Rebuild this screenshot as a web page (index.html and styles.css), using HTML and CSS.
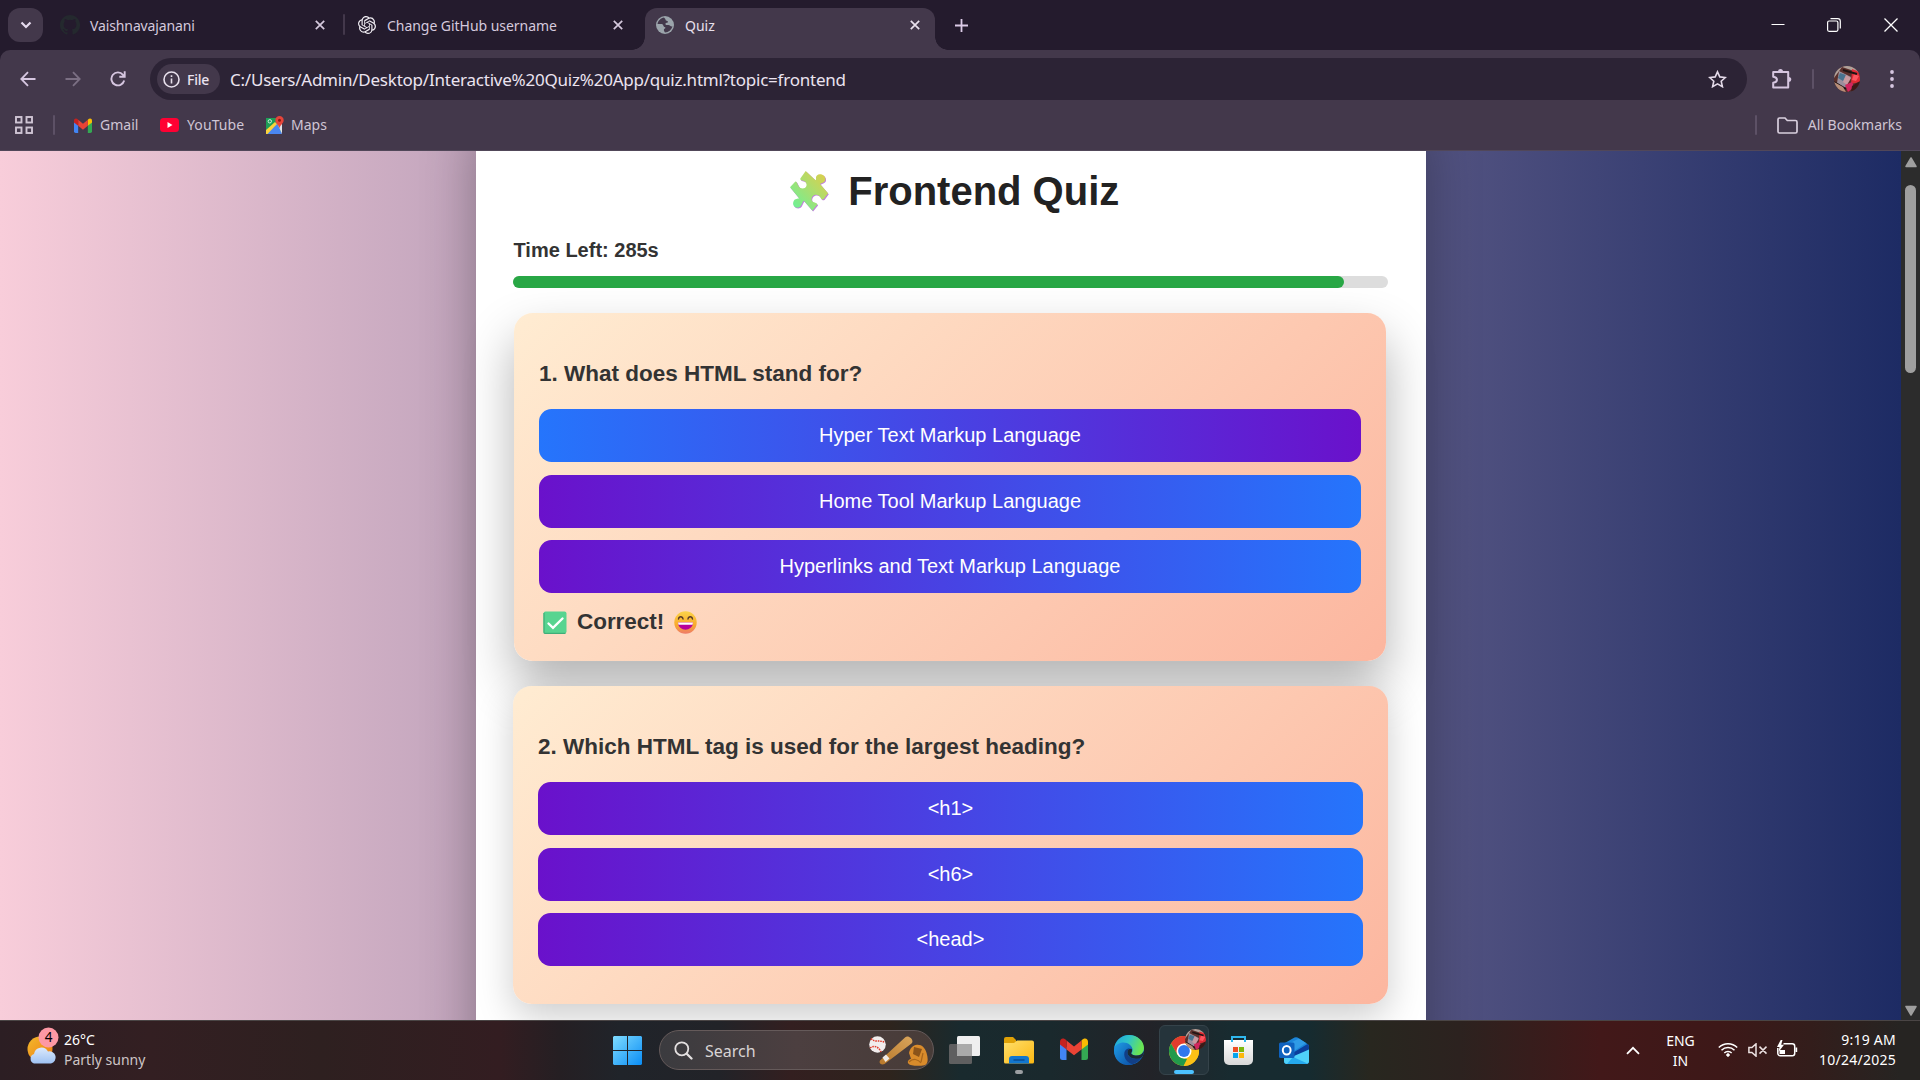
FILE: index.html
```html
<!DOCTYPE html>
<html lang="en">
<head>
<meta charset="utf-8">
<title>Quiz</title>
<link rel="stylesheet" href="styles.css">
</head>
<body>
<svg width="0" height="0" class="defs" aria-hidden="true">
  <defs>
    <linearGradient id="puz" x1="0" y1="1" x2="1" y2="0"><stop offset="0" stop-color="#62f59c"/><stop offset=".5" stop-color="#a6df72"/><stop offset="1" stop-color="#e6cc44"/></linearGradient>
    <linearGradient id="sun" x1="0" y1="0" x2="1" y2="1"><stop offset="0" stop-color="#f2b92c"/><stop offset="1" stop-color="#f07b12"/></linearGradient>
    <linearGradient id="cloud" x1="0" y1="0" x2="0" y2="1"><stop offset="0" stop-color="#dce9fb"/><stop offset="1" stop-color="#9fc2f3"/></linearGradient>
    <linearGradient id="win" x1="0" y1="0" x2="1" y2="1"><stop offset="0" stop-color="#7fdcff"/><stop offset="1" stop-color="#0a8df5"/></linearGradient>
    <linearGradient id="fold" x1="0" y1="0" x2="1" y2="1"><stop offset="0" stop-color="#ffdf6b"/><stop offset="1" stop-color="#fcb813"/></linearGradient>
    <linearGradient id="edgeTop" x1="0" y1="0" x2="1" y2=".3"><stop offset="0" stop-color="#1fa5dc"/><stop offset=".5" stop-color="#2fc4c9"/><stop offset="1" stop-color="#6ae553"/></linearGradient>
    <linearGradient id="edgeLow" x1="0" y1="0" x2="1" y2="1"><stop offset="0" stop-color="#1f9de6"/><stop offset="1" stop-color="#0c4fa5"/></linearGradient>
    <linearGradient id="bat" x1="0" y1="1" x2="1" y2="0"><stop offset="0" stop-color="#b8782a"/><stop offset="1" stop-color="#d9a55c"/></linearGradient>
    <linearGradient id="face" x1="0" y1="0" x2="0" y2="1"><stop offset="0" stop-color="#fbd34a"/><stop offset=".6" stop-color="#f9ab2c"/><stop offset="1" stop-color="#ee7a6a"/></linearGradient>
    <linearGradient id="paper" x1="0" y1="0" x2="0" y2="1"><stop offset="0" stop-color="#ffffff"/><stop offset="1" stop-color="#d8d8d8"/></linearGradient>
    <clipPath id="round"><circle cx="13" cy="13" r="13"/></clipPath>
    <symbol id="gmail" viewBox="0 0 28 22">
      <path d="M0 4v15.500a2.500 2.500 0 0 0 2.500 2.500H6.500V9z" fill="#4285f4"/>
      <path d="M28 4v15.500a2.500 2.500 0 0 1-2.500 2.500H21.500V9z" fill="#34a853"/>
      <path d="M21.500 2.500V11.500L28 6.500V4c0-3.500-3.500-4.800-6.500-1.500z" fill="#fbbc04"/>
      <path d="M6.500 11.500V2.500l7.500 6 7.500-6v9L14 17.200z" fill="#ea4335"/>
      <path d="M0 4v2.500l6.500 5v-9C3.500-.8 0 .5 0 4z" fill="#c5221f"/>
    </symbol>
    <symbol id="avatar" viewBox="0 0 26 26">
      <g clip-path="url(#round)">
        <rect width="26" height="26" fill="#5a2f2b"/>
        <path d="M0 0h26v7L8 1 0 12z" fill="#b0a29b"/>
        <path d="M5 5l12 6-6 11-8-5z" fill="#9b8f9c"/>
        <path d="M6 7l6 2-3 6-5-3z" fill="#49738f"/>
        <path d="M12 9l5 3-4 7-4-3z" fill="#c89aa0"/>
        <path d="M18 3l8 3v10l-9 2z" fill="#e02b35"/>
        <path d="M20 8l5 2-3 5-4-1z" fill="#ff5660"/>
        <path d="M9 4l14 4M0 16l12 7" stroke="#1e1414" stroke-width="2"/>
        <path d="M0 16l9 5 3 5H0z" fill="#b88e78"/>
        <path d="M11 19l7-3 2 5-6 5z" fill="#d1265d"/>
        <path d="M18 20l8-5v11h-9z" fill="#3c1917"/>
      </g>
    </symbol>
    <symbol id="x" viewBox="0 0 10 10"><path d="M.8.800l8.400 8.400M9.200.800L.8 9.200" stroke="currentColor" stroke-width="1.700" fill="none"/></symbol>
  </defs>
</svg>

<header class="strip">
  <div class="tab-search"><svg width="12" height="8" viewBox="0 0 12 8"><path d="M1.500 1.500L6 6l4.500-4.500" fill="none" stroke="#e6dbef" stroke-width="2.200"/></svg></div>
  <div class="tab tab-a">
    <svg width="20" height="20" viewBox="0 0 16 16"><path fill="#24292e" d="M8 0C3.580 0 0 3.580 0 8c0 3.540 2.290 6.530 5.470 7.590.4.070.55-.17.55-.38v-1.490c-2.010.37-2.530-.49-2.690-.94-.09-.23-.48-.94-.82-1.130-.28-.15-.68-.52-.01-.53.63-.01 1.080.58 1.230.82.72 1.210 1.870.87 2.330.66.070-.52.280-.87.510-1.070-1.780-.2-3.640-.89-3.640-3.950 0-.87.310-1.590.82-2.150-.08-.2-.36-1.020.080-2.120 0 0 .67-.21 2.200.82a7.600 7.600 0 0 1 4 0c1.530-1.040 2.200-.82 2.200-.82.440 1.100.16 1.920.080 2.120.51.560.82 1.270.82 2.150 0 3.070-1.870 3.750-3.650 3.950.29.250.54.730.54 1.480v2.200c0 .21.150.46.550.38A8 8 0 0 0 8 0z"/></svg>
    <span class="name n1">Vaishnavajanani</span>
    <svg class="close" width="10" height="10"><use href="#x"/></svg>
  </div>
  <i class="tab-sep"></i>
  <div class="tab tab-b">
    <svg width="18" height="18" viewBox="0 0 24 24"><path fill="#f1eef4" d="M22.280 9.820a5.980 5.980 0 0 0-.52-4.910 6.050 6.050 0 0 0-6.510-2.900A6.070 6.070 0 0 0 4.980 4.180a5.980 5.980 0 0 0-4 2.900 6.050 6.050 0 0 0 .74 7.100 5.980 5.980 0 0 0 .51 4.910 6.050 6.050 0 0 0 6.510 2.900A5.980 5.980 0 0 0 13.260 24a6.060 6.060 0 0 0 5.770-4.210 5.990 5.990 0 0 0 4-2.900 6.060 6.060 0 0 0-.75-7.070zm-9.020 12.610a4.480 4.480 0 0 1-2.880-1.040l.14-.08 4.780-2.760a.8.8 0 0 0 .39-.68v-6.740l2.020 1.170a.07.07 0 0 1 .04.050v5.580a4.500 4.500 0 0 1-4.490 4.500zm-9.660-4.130a4.470 4.470 0 0 1-.53-3.010l.14.080 4.780 2.760a.77.77 0 0 0 .78 0l5.840-3.370v2.330a.08.08 0 0 1-.03.060L9.740 19.950a4.500 4.500 0 0 1-6.140-1.650zM2.340 7.900a4.490 4.490 0 0 1 2.370-1.980v5.680a.77.77 0 0 0 .39.680l5.810 3.350-2.020 1.170a.08.08 0 0 1-.07 0L4 14.010A4.500 4.500 0 0 1 2.340 7.870zm16.600 3.860L13.100 8.360l2.020-1.160a.08.08 0 0 1 .07 0l4.830 2.790a4.490 4.490 0 0 1-.68 8.100v-5.670a.79.79 0 0 0-.4-.66zm2.010-3.020l-.14-.09-4.770-2.780a.78.78 0 0 0-.79 0L9.410 9.230V6.900a.07.07 0 0 1 .03-.06l4.830-2.790a4.500 4.500 0 0 1 6.680 4.660zM8.310 12.860l-2.020-1.160a.08.08 0 0 1-.04-.06V6.070a4.500 4.500 0 0 1 7.380-3.450l-.14.080-4.780 2.760a.8.8 0 0 0-.39.680zm1.100-2.370l2.600-1.500 2.600 1.500v3l-2.600 1.500-2.600-1.500z"/></svg>
    <span class="name n2">Change GitHub username</span>
    <svg class="close" width="10" height="10"><use href="#x"/></svg>
  </div>
  <div class="tab tab-c">
    <svg width="18" height="18" viewBox="0 0 18 18"><circle cx="9" cy="9" r="9" fill="#9ba4ab"/><path d="M8 1.500C5 2 2 4.500 1.500 8l4 0c2 0 1.500 2.500 3 3 1 .4 1.500 1 0 1.800-1 .6-.8 2 .5 3.700 3.500-.3 6.500-2.500 7.500-6-2 .5-2.500-1.500-4-1.500-1 0-2.500.4-3-.8-.5-1.500 2.500-1.200 2.500-2.400 0-1-2.500-.8-2.500-2 0-.8-.5-1.200-1.500-2.300z" fill="#43384b"/></svg>
    <span class="name n3">Quiz</span>
    <svg class="close" width="10" height="10"><use href="#x"/></svg>
  </div>
  <svg class="plus" width="13" height="13" viewBox="0 0 13 13"><path d="M6.500 0v13M0 6.500h13" stroke="#dccbe7" stroke-width="1.800"/></svg>
  <div class="win">
    <svg width="14" height="14" viewBox="0 0 14 14"><path d="M.5 6.500h13" stroke="#fff" stroke-width="1"/></svg>
    <svg width="14" height="14" viewBox="0 0 14 14" fill="none" stroke="#fff"><rect x=".6" y="3" width="10.300" height="10.300" rx="1.500" stroke-width="1.200"/><path d="M3.500.7h7.200a2.600 2.600 0 0 1 2.600 2.600v7.200" stroke-width="1.200"/></svg>
    <svg width="14" height="14" viewBox="0 0 14 14"><path d="M.5.500l13 13M13.500.500l-13 13" stroke="#fff" stroke-width="1.300"/></svg>
  </div>
</header>

<div class="toolbar-bg">
<div class="toolbar">
  <div class="nav">
    <svg width="16" height="16" viewBox="0 0 16 16" fill="none" stroke="#d6c6e0" stroke-width="1.800"><path d="M15.500 8H1.500M8 1.200L1.300 8 8 14.800"/></svg>
    <svg width="16" height="16" viewBox="0 0 16 16" fill="none" stroke="#7b6f83" stroke-width="1.800"><path d="M.5 8h14M8 1.200L14.700 8 8 14.800"/></svg>
    <svg width="16" height="16" viewBox="0 0 16 16" fill="none" stroke="#d6c6e0" stroke-width="1.900"><path d="M14.200 9.500A6.500 6.500 0 1 1 13 3.800l1.500 1.700M14.700.3v5.500H9.300"/></svg>
  </div>
  <div class="omnibox">
    <div class="chip">
      <svg width="17" height="17" viewBox="0 0 17 17"><circle cx="8.500" cy="8.500" r="7.500" fill="none" stroke="#e8e0ec" stroke-width="1.600"/><path d="M8.500 7.500v5M8.500 4.300v1.800" stroke="#e8e0ec" stroke-width="1.600"/></svg>
      <span>File</span>
    </div>
    <span class="url">C:/Users/Admin/Desktop/Interactive%20Quiz%20App/quiz.html?topic=frontend</span>
    <svg class="star" width="19" height="18" viewBox="0 0 19 18"><path d="M9.500 1.800l2.300 5.100 5.500.6-4.100 3.700 1.200 5.500-4.900-2.800-4.900 2.800 1.200-5.500L1.700 7.500l5.500-.6z" fill="none" stroke="#e4dae9" stroke-width="1.600"/></svg>
  </div>
  <svg class="ext" width="21" height="21" viewBox="0 0 21 21"><path d="M2.200 4h15v15.500h-15v-4.800c5-.6 5-5.400 0-6z" fill="none" stroke="#d6c6e0" stroke-width="2" stroke-linejoin="round"/><path d="M7 3.500a2.500 2.500 0 0 1 5 0zM17.800 9a2.500 2.500 0 0 1 0 5z" fill="#d6c6e0"/></svg>
  <i class="bar-sep"></i>
  <svg class="me" width="26" height="26"><use href="#avatar"/></svg>
  <svg class="dots" width="4" height="18" viewBox="0 0 4 18" fill="#d6c6e0"><circle cx="2" cy="2" r="1.900"/><circle cx="2" cy="9" r="1.900"/><circle cx="2" cy="16" r="1.900"/></svg>
</div>

<nav class="bookmarks">
  <svg width="18" height="18" viewBox="0 0 18 18" fill="none" stroke="#cfc5d4" stroke-width="1.900"><rect x="1" y="1" width="5.500" height="5.500"/><rect x="11.500" y="1" width="5.500" height="5.500"/><rect x="1" y="11.500" width="5.500" height="5.500"/><rect x="11.500" y="11.500" width="5.500" height="5.500"/></svg>
  <i class="bar-sep"></i>
  <a class="bm gm"><svg width="18" height="15" viewBox="0 0 28 22" preserveAspectRatio="none"><use href="#gmail" width="28" height="22"/></svg><span>Gmail</span></a>
  <a class="bm yt"><svg width="19" height="14" viewBox="0 0 19 14"><rect width="19" height="14" rx="3.500" fill="#ff0033"/><path d="M7.500 4v6l5-3z" fill="#fff"/></svg><span>YouTube</span></a>
  <a class="bm mp"><svg width="18" height="19" viewBox="0 0 18 19"><path d="M0 2h15v16H0z" fill="#1e9e57"/><path d="M0 18L11 7l5 11z" fill="#4a86f0"/><path d="M0 18V14L9 6l2 2L1.500 18z" fill="#fbd33b"/><path d="M11 7l5 11V7z" fill="#dfe3e8"/><circle cx="3.800" cy="5.300" r="1.700" fill="none" stroke="#cfeedd" stroke-width="1"/><path d="M13.500 0a4.200 4.200 0 0 1 4.200 4.200c0 3-3.200 4.300-4.200 8-1-3.700-4.200-5-4.200-8A4.200 4.200 0 0 1 13.500 0z" fill="#e5453a"/><circle cx="13.500" cy="4.200" r="1.500" fill="#8c1a14"/></svg><span>Maps</span></a>
  <span class="grow"></span>
  <i class="bar-sep"></i>
  <a class="bm all"><svg width="21" height="17" viewBox="0 0 21 17"><path d="M1 14V2.500A1.500 1.500 0 0 1 2.500 1H8l2.300 2.500h8.200A1.500 1.500 0 0 1 20 5v9.500a1.500 1.500 0 0 1-1.500 1.500h-16A1.500 1.500 0 0 1 1 14.500z" fill="none" stroke="#d9cfde" stroke-width="1.700"/></svg><span>All Bookmarks</span></a>
</nav>
</div>

<div class="viewport">
  <main class="page">
    <section class="quiz">
      <h1><svg width="39" height="41" viewBox="0 0 87 121" preserveAspectRatio="none"><path transform="translate(1.500 2.500)" fill="#c07be0" d="M35 0L57 27C60 24 56 18 60 13 66 5 79 12 79 24 79 34 70 35 67 38L85 66 76 82C73 86 70 84 68 78 62 62 44 72 49 88 51 94 62 94 61 99L50 117 31 88C27 92 27 102 21 107 12 112 4 100 8 89 11 81 18 84 20 80L0 48 12 31C17 30 17 48 25 51 35 54 40 42 35 33 31 26 22 30 23 22z"/><path fill="url(#puz)" d="M35 0L57 27C60 24 56 18 60 13 66 5 79 12 79 24 79 34 70 35 67 38L85 66 76 82C73 86 70 84 68 78 62 62 44 72 49 88 51 94 62 94 61 99L50 117 31 88C27 92 27 102 21 107 12 112 4 100 8 89 11 81 18 84 20 80L0 48 12 31C17 30 17 48 25 51 35 54 40 42 35 33 31 26 22 30 23 22z"/></svg><span>Frontend Quiz</span></h1>
      <p class="timer">Time Left: 285s</p>
      <div class="progress"><div class="fill" style="width: 95%"></div></div>

      <article class="card active">
        <h3>1. What does HTML stand for?</h3>
        <div class="options">
          <button class="picked">Hyper Text Markup Language</button>
          <button>Home Tool Markup Language</button>
          <button>Hyperlinks and Text Markup Language</button>
        </div>
        <p class="feedback">
          <svg width="24" height="23" viewBox="0 0 24 23"><rect x=".5" y=".5" width="23" height="22" rx="2" fill="#58d490"/><path d="M1 2v19.500a.8.8 0 0 0 .8.800H22.500" fill="none" stroke="#3fae78" stroke-width="1.200"/><path d="M5.500 12.500l4.500 4.300L19.500 7.500" fill="none" stroke="#fff" stroke-width="2.400" stroke-linecap="round"/></svg>
          <span>Correct!</span>
          <svg width="23" height="23" viewBox="0 0 23 23"><circle cx="11.500" cy="11.500" r="11.200" fill="url(#face)"/><path d="M4.500 8c.5-3 4-3 4.500 0M14 8c.5-3 4-3 4.500 0" fill="none" stroke="#5a3b2a" stroke-width="1.400" stroke-linecap="round"/><path d="M4 11.500h15c0 9.500-15 9.500-15 0z" fill="#b8009a"/><path d="M4 11.500h15l-.5 2.300h-14z" fill="#fff"/></svg>
        </p>
      </article>

      <article class="card">
        <h3>2. Which HTML tag is used for the largest heading?</h3>
        <div class="options">
          <button>&lt;h1&gt;</button>
          <button>&lt;h6&gt;</button>
          <button>&lt;head&gt;</button>
        </div>
      </article>
    </section>
  </main>
  <aside class="scroll">
    <svg width="12" height="11" viewBox="0 0 12 11"><path d="M6 1l5 8.500H1z" fill="#9f9f9f" stroke="#9f9f9f" stroke-width="1.500" stroke-linejoin="round"/></svg>
    <i class="thumb"></i>
    <span class="grow"></span>
    <svg width="12" height="11" viewBox="0 0 12 11"><path d="M6 10L1 1.500h10z" fill="#9f9f9f" stroke="#9f9f9f" stroke-width="1.500" stroke-linejoin="round"/></svg>
  </aside>
</div>

<footer class="taskbar">
  <div class="weather">
    <svg width="34" height="38" viewBox="0 0 34 38"><circle cx="13" cy="22" r="12.500" fill="url(#sun)"/><path d="M7 36.500a5 5 0 0 1 0-9.500 7.500 7.500 0 0 1 14-2.500 6 6 0 0 1 3 12z" fill="url(#cloud)"/><circle cx="21.500" cy="10.500" r="10" fill="#fd98a4"/><text x="21.500" y="15.200" text-anchor="middle" class="badge">4</text></svg>
    <div class="wt"><b>26°C</b><span>Partly sunny</span></div>
  </div>
  <div class="center">
    <svg class="start" width="29" height="29" viewBox="0 0 29 29"><path d="M1 0h13v14H0V1zM15 0h13l1 1v13H15zM0 15h14v14H1l-1-1zM15 15h14v13l-1 1H15z" fill="url(#win)"/></svg>
    <div class="search">
      <svg width="19" height="19" viewBox="0 0 19 19" fill="none" stroke="#e4e0e0" stroke-linecap="round"><circle cx="7.800" cy="7.800" r="6.500" stroke-width="1.800"/><path d="M12.700 12.700l4.800 4.800" stroke-width="2.300"/></svg>
      <span>Search</span>
      <svg class="sport" width="60" height="31" viewBox="0 0 60 31">
        <circle cx="8.500" cy="9.500" r="8.300" fill="#f1eded"/><path d="M2 3.500c3.500 4.500 8.500 1 14 4M1 13c5-3.500 9-.5 11 4" fill="none" stroke="#df3a2a" stroke-width="1.500" stroke-dasharray="1.600 .9"/>
        <path d="M11 25.500L36 2.500c3-3.500 10 2.500 6.500 6L15.500 29c-3 1.500-6-.8-4.500-3.500z" fill="url(#bat)"/><path d="M13.500 22.500l3.500-3 3.500 4-4 3.500z" fill="#f2ebe6"/>
        <path d="M40 18c1-5 4-8 8-8.300 5-.3 8 3 9.500 8 2 6 1.500 12-2 12.500-5 .8-14 1-16-1.500-2-2.500.5-4 2.500-5z" fill="#d98b2b"/><path d="M45 12l8 2-3 8-6-3z" fill="#8a531a"/><path d="M40 27c4-4 9-3 12 1M54 18l-2 9" fill="none" stroke="#a8651a" stroke-width="1.200"/>
      </svg>
    </div>
    <svg class="tv" width="31" height="28" viewBox="0 0 31 28"><rect x="0" y="8" width="23" height="20" rx="1.500" fill="#5f5f60"/><rect x="8" y="0" width="23" height="20" rx="1.500" fill="#efefef"/><path d="M8 8h15v12H9.500A1.500 1.500 0 0 1 8 18.500z" fill="#aaa"/></svg>
    <div class="app run">
      <svg width="30" height="27" viewBox="0 0 30 27"><path d="M0 2a2 2 0 0 1 2-2h7l3 3v4H0z" fill="#e0a106"/><path d="M0 6h10l3-2.500h15a2 2 0 0 1 2 2V25a1.500 1.500 0 0 1-1.500 1.500h-27A1.500 1.500 0 0 1 0 25z" fill="url(#fold)"/><path d="M5 26.500V22a3 3 0 0 1 3-3h14a3 3 0 0 1 3 3v4.500z" fill="#1277cf"/><path d="M9.500 23h11" stroke="#0a4d94" stroke-width="1.500"/></svg>
    </div>
    <svg class="gmail" width="28" height="22"><use href="#gmail"/></svg>
    <svg class="edge" width="30" height="30" viewBox="0 0 30 30"><circle cx="15" cy="15" r="15" fill="#1273cf"/><path d="M.2 13C1.500 5.500 7.500 0 15 0c8.500 0 15 6 15 13 0 5-3.500 7.500-7.500 7.500-3.500 0-5.500-1.500-5-2.600 1.500-2 1.600-4 0-6C13 6.500 4 7 .2 13z" fill="url(#edgeTop)"/><path d="M.1 14C2 7.500 11 5.500 16 10c2 2 2 3 2 4-3-2.500-7.500-.5-8 4.500-.5 5.500 4 10.500 9 11C9 32.500-1 25 .1 14z" fill="url(#edgeLow)"/><path d="M10.500 17c-1.500 6 3 11 8 12.300 4-1 7.500-4 9-7-7 3-14 .5-14-4.500 0-2 1-3.500 2.500-4.500-2.500 0-4.800 1.500-5.500 3.700z" fill="#123f86"/><path d="M13.500 17.500c0-2.500 1.800-4.200 4.300-3.500.5 1.500.2 2.700-.5 3.700-.5 1.200 1.700 2.800 5.200 2.800 3.500 0 6-1.500 7.300-4.500.2 3-.8 5-2.100 6.500-7 3-14.200 0-14.200-5z" fill="#1b2a33"/></svg>
    <div class="app chrome">
      <svg width="30" height="30" viewBox="0 0 30 30"><circle cx="15" cy="15" r="15" fill="#fbc116"/><path d="M2 7.500A15 15 0 0 1 28 7.500H15L8.500 18.700z" fill="#e33b2e"/><path d="M2 7.500l6.500 11.300L15 22.500l3 .5-3.500 7A15 15 0 0 1 2 7.500z" fill="#229a4b"/><path d="M28 7.500A15 15 0 0 1 14.800 30l6.700-11.200V11L15 7.500z" fill="#fbc116"/><circle cx="15" cy="15" r="7.500" fill="#fff"/><circle cx="15" cy="15" r="5.900" fill="#2f78ee"/></svg>
      <svg class="mini" width="21" height="21"><use href="#avatar"/></svg>
    </div>
    <svg class="store" width="29" height="29" viewBox="0 0 29 29"><path d="M0 4h29v20a5 5 0 0 1-5 5H5a5 5 0 0 1-5-5z" fill="url(#paper)"/><path d="M8 6V1h13v5" fill="none" stroke="#2fb8ee" stroke-width="2"/><path d="M9 11h5v5H9z" fill="#ee4e24"/><path d="M15 11h5v5h-5z" fill="#7db80d"/><path d="M9 17h5v5H9z" fill="#06a4ee"/><path d="M15 17h5v5h-5z" fill="#fcb80d"/></svg>
    <svg class="outlook" width="30" height="27" viewBox="0 0 30 27"><path d="M5 6.500L15.500.600a3 3 0 0 1 3 0L28.500 7a3 3 0 0 1 1.500 2.500V24a3 3 0 0 1-3 3H8a3 3 0 0 1-3-3z" fill="#1b86da"/><path d="M9 7L20 1.500l7 4.500L12 16z" fill="#2f9be6"/><path d="M12 17L28.500 7a3 3 0 0 1 1.500 2.500v4L16 22z" fill="#0b3f9c"/><path d="M15 19l15-6.500V24a3 3 0 0 1-3 3H8a3 3 0 0 1-3-3v-3h7z" fill="#4fd2fa"/><path d="M14 20l14.500 6.500-1.500.5H8z" fill="#25a9ee"/><rect x="0" y="5.500" width="15.500" height="15.500" rx="1.500" fill="#0f62bf"/><ellipse cx="7.700" cy="13.200" rx="3.900" ry="4.300" fill="none" stroke="#fff" stroke-width="2"/></svg>
  </div>
  <div class="tray">
    <svg class="chev" width="14" height="9" viewBox="0 0 14 9"><path d="M1 7.800L7 1.800l6 6" fill="none" stroke="#fff" stroke-width="1.800"/></svg>
    <div class="lang"><span>ENG</span><span>IN</span></div>
    <svg class="wifi" width="20" height="15" viewBox="0 0 20 15" fill="none" stroke="#fff" stroke-width="1.500"><path d="M.8 5.500a13 13 0 0 1 18.400 0M3.500 8.300a9.200 9.200 0 0 1 13 0M6.300 11a5.200 5.200 0 0 1 7.400 0"/><circle cx="10" cy="13" r="1.300" fill="#fff" stroke-width="1"/></svg>
    <svg class="vol" width="20" height="14" viewBox="0 0 20 14" fill="none" stroke="#ece2e2" stroke-width="1.500"><path d="M.9 4.500h3L8 .900v12.200L3.900 9.500h-3zM11.500 3.600l7 7M18.500 3.600l-7 7"/></svg>
    <svg class="batt" width="21" height="18" viewBox="0 0 21 18"><path d="M6.500 3.700h8.700a2.500 2.500 0 0 1 2.500 2.500v7a2.500 2.500 0 0 1-2.500 2.500H3.300A2.500 2.500 0 0 1 .8 13.200V8" fill="none" stroke="#fff" stroke-width="1.500"/><path d="M18.500 7.500h1.700v4.500h-1.700z" fill="#fff"/><path d="M2.500 14V10H8V14z" fill="#fff"/><path d="M3.700 0L0 7h2.500L1.500 12 7 4.700H4.200L5.500 0z" fill="#fff"/></svg>
    <div class="clock"><span class="time">9:19 AM</span><span>10/24/2025</span></div>
  </div>
</footer>
</body>
</html>
```
FILE: styles.css
```css
* { box-sizing: border-box; }
body {
  margin: 0;
  width: 1920px;
  height: 1080px;
  overflow: hidden;
  display: flex;
  flex-direction: column;
  font-family: "Noto Sans", "Open Sans", sans-serif;
  font-size: 14px;
  background: #241b2d;
}
svg { display: block; flex: none; }
.defs { position: absolute; }
i { display: block; flex: none; }
.grow { flex: 1; }

/* tab strip */
.strip { height: 50px; flex: none; display: flex; padding: 8px 22px 0 8px; background: #241b2d; color: #d5c9dd; }
.tab-search { width: 35px; height: 34px; border-radius: 12px; background: #43384b; display: flex; align-items: center; justify-content: center; }
.tab { display: flex; align-items: center; height: 34px; }
.tab .name { flex: 1; white-space: nowrap; line-height: 20px; padding-top: 1px; }
.n1 { letter-spacing: -.12px; }
.n2 { letter-spacing: -.04px; }
.tab-a { width: 300px; padding: 0 18px 0 17px; gap: 10px; }
.tab-sep { width: 2px; height: 21px; margin-top: 6px; background: #43384b; border-radius: 1px; }
.tab-b { width: 300px; padding: 0 22px 0 13px; gap: 11px; }
.tab-c { width: 290px; height: 42px; padding: 0 15px 8px 11px; gap: 11px; background: #43384b; border-radius: 12px 12px 0 0; position: relative; color: #e8e0ec; }
.tab-c::before, .tab-c::after { content: ""; position: absolute; bottom: 0; width: 13px; height: 13px; }
.tab-c::before { left: -13px; background: radial-gradient(circle at 0 0, transparent 12.5px, #43384b 13px); }
.tab-c::after { right: -13px; background: radial-gradient(circle at 100% 0, transparent 12.5px, #43384b 13px); }
.plus { margin: 11px 0 0 20px; }
.win { margin: 10px 0 0 auto; display: flex; gap: 43px; }
.win svg:first-child { margin-right: -1px; }

/* toolbar */
.toolbar-bg { flex: none; height: 101px; background: #43384b; border-radius: 10px 10px 0 0; border-bottom: 1px solid #514759; }
.toolbar { height: 52px; padding: 8px 26px 0 20px; display: flex; }
.nav { display: flex; gap: 29px; width: 130px; padding-top: 13px; }
.nav svg:last-child { margin-top: 0; }
.omnibox { width: 1597px; height: 42px; border-radius: 21px; background: #2c2335; display: flex; align-items: center; padding: 0 20px 0 7px; color: #ebe3f0; }
.chip { width: 63px; height: 30px; border-radius: 15px; background: #43384b; display: flex; align-items: center; gap: 7px; padding-left: 6px; font-size: 14px; font-weight: 500; }
.chip span { letter-spacing: -.2px; }
.url { margin-left: 10px; font-size: 17px; letter-spacing: -.225px; white-space: nowrap; flex: 1; line-height: 24px; padding-top: 1px; }
.ext { margin: 10px 0 0 24px; }
.bar-sep { width: 2px; height: 20px; background: #5d5166; border-radius: 1px; }
.toolbar .bar-sep { margin: 11px 0 0 20px; }
.me { margin: 8px 0 0 20px; }
.dots { margin: 12px 0 0 auto; }

/* bookmarks */
.bookmarks { height: 46px; display: flex; align-items: center; padding: 0 18px 0 15px; color: #cfc5d4; }
.bookmarks > .bar-sep:nth-of-type(1) { margin-left: 20px; }
.bm { display: flex; align-items: center; white-space: nowrap; }
.bm span { margin-top: -1px; }
.gm { gap: 8px; margin-left: 19px; width: 86px; }
.yt { gap: 8px; width: 106px; letter-spacing: .1px; }
.mp { gap: 7px; }
.all { gap: 10px; margin-left: 20px; }

/* page */
.viewport { height: 869px; flex: none; display: flex; overflow: hidden; }
.page { width: 1901px; display: flex; justify-content: center; background: linear-gradient(to right, #f8cdda, #1d2b64); overflow: hidden; }
.quiz {
  width: 950px;
  height: 1100px;
  margin-top: -40px;
  padding: 57px 37.5px 0;
  background: #fff;
  box-shadow: 0 18px 50px rgba(0, 0, 0, .3);
  font-family: "Liberation Sans", Arial, sans-serif;
  color: #333;
}
h1 { margin: 0; height: 46px; display: flex; justify-content: center; align-items: center; gap: 19.5px; font-size: 40px; color: #222; line-height: 46px; padding-left: 8px; }
.timer { margin: 25px 0 0 .5px; font-size: 20px; line-height: 23px; font-weight: bold; }
.progress { margin-top: 14px; height: 12px; border-radius: 6px; background: #ddd; }
.fill { height: 12px; border-radius: 6px; background: #28a745; }
.card {
  margin-top: 25px;
  padding: 25px;
  height: 318px;
  border-radius: 18.75px;
  background: linear-gradient(135deg, #ffecd2, #fcb69f);
  box-shadow: 0 12.5px 37.5px rgba(0, 0, 0, .2);
}
.card.active { height: 348px; margin: 25px 2px 0 1px; box-shadow: 0 25px 50px rgba(0, 0, 0, .3); }
h3 { margin: 22px 0; font-size: 22.500px; line-height: 27px; }
.options { display: flex; flex-direction: column; gap: 12.500px; }
button {
  height: 53px;
  padding: 0;
  border: 0;
  border-radius: 12.500px;
  color: #fff;
  font: 20px/23px "Liberation Sans", Arial, sans-serif;
  background: linear-gradient(to right, #6a11cb, #2575fc);
}
.picked { background: linear-gradient(to right, #2575fc, #6a11cb); }
.feedback { margin: 15px 0 0; padding-left: 4px; height: 28px; display: flex; align-items: center; gap: 10px; font-size: 22.500px; font-weight: bold; }
.feedback span { letter-spacing: -.05px; }

.scroll { width: 19px; background: #2c2c2c; display: flex; flex-direction: column; padding: 6px 0 4px 4px; }
.thumb { width: 11px; height: 188px; margin-top: 17px; border-radius: 6px; background: #9f9f9f; }

/* taskbar */
.taskbar {
  height: 60px;
  flex: none;
  display: flex;
  border-top: 1px solid #4a4545;
  color: #fff;
  background: linear-gradient(to right, #2c1e23 0, #331f22 150px, #2e2020 320px, #331d21 500px, #251f23 560px, #20242a 620px, #222328 720px, #331f20 790px, #2e241d 890px, #192a2e 960px, #1a292d 1050px, #222328 1150px, #182b30 1230px, #162b30 1310px, #28271f 1370px, #2c221f 1460px, #421819 1600px, #3d1818 1720px, #331d1b 1810px, #262422 1900px);
}
.weather { display: flex; width: 613px; padding-left: 27px; }
.weather > svg { margin-top: 6px; }
.badge { font-size: 13.500px; fill: #000; }
.wt { display: flex; flex-direction: column; margin-left: 3px; padding-top: 9px; line-height: 20px; }
.wt b { font-weight: 400; }
.wt span { color: #cdc5c6; }
.center { display: flex; }
.start { margin-top: 15px; }
.search { width: 275px; height: 40px; margin: 9px 0 0 17px; border-radius: 20px; border: 1px solid #655a5a; background: linear-gradient(to right, #3b3b3f, #4c3f40 50%, #483c38); display: flex; align-items: center; padding-left: 14px; color: #d8d4d4; font-size: 16px; }
.search span { margin: 1px 0 0 12px; }
.sport { margin-left: auto; margin-right: 4px; }
.tv { margin: 15px 0 0 15px; }
.app { position: relative; height: 50px; }
.run { margin-left: 24px; padding-top: 16px; }
.run::after { content: ""; position: absolute; left: 11px; top: 49px; width: 8px; height: 4px; border-radius: 2px; background: #9b9fa2; }
.gmail { margin: 17px 0 0 26px; }
.edge { margin: 14px 0 0 26px; }
.chrome { width: 50px; margin: 4px 0 0 15px; padding: 10px 9px; border-radius: 6px; border: 1px solid #35434a; background: #25343b; }
.chrome::after { content: ""; position: absolute; left: 14px; top: 44px; width: 20px; height: 4px; border-radius: 2px; background: #4cc2ff; }
.mini { position: absolute; left: 25px; top: 3px; }
.store { margin: 15px 0 0 15px; }
.outlook { margin: 16px 0 0 26px; }
.tray { display: flex; flex: 1; justify-content: flex-end; padding-right: 24px; }
.chev { margin: 25px 26px 0 0; }
.lang { width: 29px; text-align: center; display: flex; flex-direction: column; padding-top: 10px; line-height: 20px; margin-right: 23px; }
.wifi { margin: 21px 10px 0 0; }
.vol { margin: 22px 9px 0 0; }
.batt { margin: 19px 0 0; }
.clock { width: 98px; text-align: right; display: flex; flex-direction: column; padding-top: 9px; line-height: 20px; letter-spacing: .25px; }
```
